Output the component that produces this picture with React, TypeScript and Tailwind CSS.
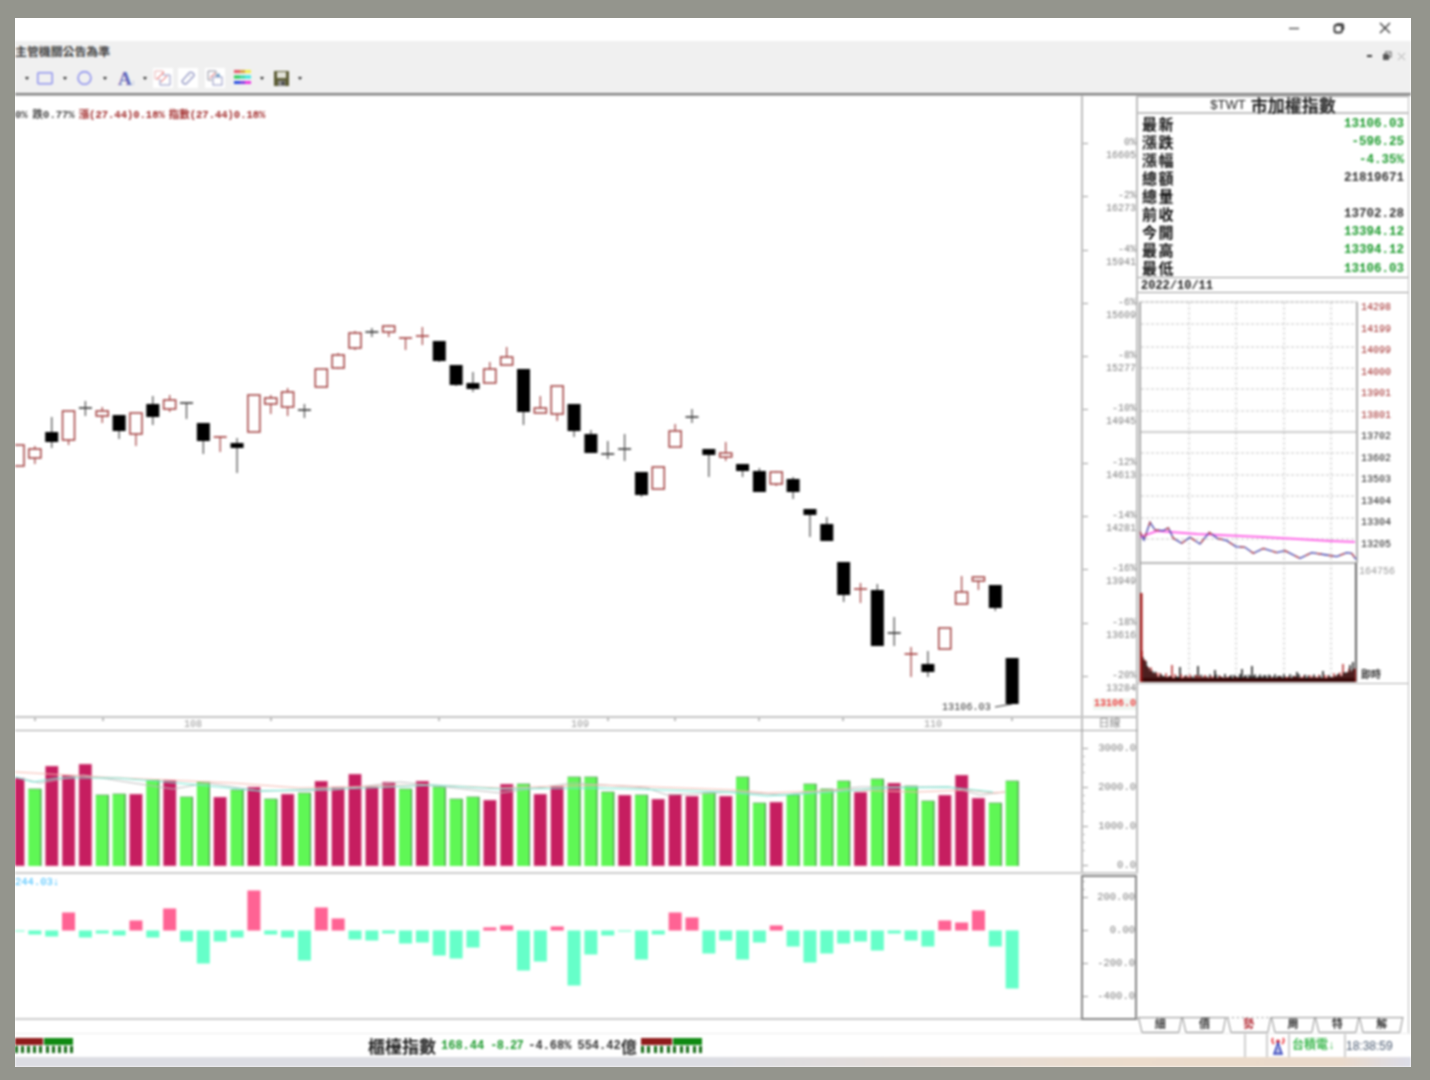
import React from "react";

type K = "r" | "b";
const candles: [number, number, number, number, K][] = [
  [445, 466, 445, 466, "r"], [446, 464, 449, 458, "r"], [417, 448, 432, 442, "b"], [411, 445, 411, 440, "r"],
  [401, 416, 408, 408, "b"], [407, 423, 411, 416, "r"], [415, 439, 415, 431, "b"], [413, 446, 413, 434, "r"],
  [396, 425, 404, 417, "b"], [395, 412, 400, 409, "r"], [403, 419, 403, 403, "b"], [423, 454, 423, 441, "b"],
  [437, 452, 437, 437, "r"], [438, 473, 443, 448, "b"], [395, 432, 395, 432, "r"], [395, 414, 398, 404, "r"],
  [388, 416, 392, 407, "r"], [404, 418, 410, 410, "b"], [369, 387, 369, 387, "r"], [353, 369, 355, 368, "r"],
  [331, 350, 333, 348, "r"], [328, 337, 332, 332, "b"], [325, 337, 326, 332, "r"], [338, 350, 338, 338, "r"],
  [327, 345, 336, 336, "r"], [341, 362, 341, 361, "b"], [365, 386, 365, 385, "b"], [372, 392, 383, 389, "b"],
  [362, 383, 369, 383, "r"], [347, 365, 357, 365, "r"], [369, 425, 369, 412, "b"], [396, 413, 408, 413, "r"],
  [386, 421, 386, 414, "r"], [404, 437, 404, 431, "b"], [430, 453, 434, 453, "b"], [441, 459, 454, 454, "b"],
  [434, 461, 449, 449, "b"], [472, 497, 472, 495, "b"], [467, 489, 467, 489, "r"], [424, 447, 431, 447, "r"],
  [409, 423, 417, 417, "b"], [449, 477, 449, 455, "b"], [442, 461, 453, 457, "r"], [464, 477, 464, 471, "b"],
  [468, 492, 471, 492, "b"], [471, 486, 472, 484, "r"], [477, 499, 479, 492, "b"], [509, 537, 509, 515, "b"],
  [517, 541, 524, 541, "b"], [562, 602, 562, 595, "b"], [583, 603, 589, 589, "r"], [584, 646, 590, 646, "b"],
  [617, 646, 633, 633, "b"], [647, 677, 654, 654, "r"], [651, 677, 664, 672, "b"], [628, 649, 628, 649, "r"],
  [576, 604, 592, 604, "r"], [577, 590, 577, 581, "r"], [585, 611, 585, 608, "b"], [658, 704, 658, 704, "b"],
];

const volume: [number, K][] = [
  [778, "r"], [789, "b"], [766, "r"], [775, "r"], [764, "r"], [795, "b"], [794, "b"], [794, "r"], [780, "b"], [780, "r"],
  [797, "b"], [782, "b"], [797, "r"], [790, "b"], [787, "r"], [799, "b"], [794, "r"], [793, "b"], [781, "r"], [787, "r"],
  [774, "r"], [786, "r"], [782, "r"], [789, "b"], [781, "r"], [787, "b"], [799, "b"], [797, "b"], [800, "r"], [784, "r"],
  [784, "b"], [794, "r"], [786, "r"], [777, "b"], [777, "b"], [792, "b"], [795, "r"], [795, "b"], [799, "r"], [794, "r"],
  [796, "r"], [793, "b"], [796, "r"], [777, "b"], [803, "b"], [802, "r"], [795, "b"], [784, "b"], [789, "b"], [781, "b"],
  [792, "r"], [779, "b"], [783, "r"], [786, "b"], [801, "b"], [795, "r"], [775, "r"], [798, "r"], [803, "b"], [781, "b"],
];

const macd = [
  -1, -4, -6, 18, -7, -3, -5, 10, -7, 22, -11, -33, -11, -7, 40, -4, -7, -30, 23, 12,
  -9, -10, -3, -13, -12, -25, -28, -17, 3, 5, -40, -31, 4, -55, -24, -5, -1, -29, -4, 18,
  13, -23, -10, -29, -12, 5, -16, -32, -23, -13, -11, -20, -3, -10, -16, 10, 8, 20, -16, -58,
];

const cx = (i: number) => 18 + 16.85 * i;

const quotes: [string, string, string][] = [
  ["最新", "13106.03", "text-[#1b9a2c]"],
  ["漲跌", "-596.25", "text-[#1b9a2c]"],
  ["漲幅", "-4.35%", "text-[#1b9a2c]"],
  ["總額", "21819671", "text-[#333333]"],
  ["總量", "", "text-[#333333]"],
  ["前收", "13702.28", "text-[#333333]"],
  ["今開", "13394.12", "text-[#1b9a2c]"],
  ["最高", "13394.12", "text-[#1b9a2c]"],
  ["最低", "13106.03", "text-[#1b9a2c]"],
];

const axisRows: [string, string][] = [
  ["0%", "16605"], ["-2%", "16273"], ["-4%", "15941"], ["-6%", "15609"], ["-8%", "15277"], ["-10%", "14945"],
  ["-12%", "14613"], ["-14%", "14281"], ["-16%", "13949"], ["-18%", "13616"],
];

const priceLabels: [string, string][] = [
  ["14298", "text-[#a02a2a]"], ["14199", "text-[#a02a2a]"], ["14099", "text-[#a02a2a]"], ["14000", "text-[#a02a2a]"],
  ["13901", "text-[#a02a2a]"], ["13801", "text-[#a02a2a]"], ["13702", "text-[#222222]"], ["13602", "text-[#222222]"],
  ["13503", "text-[#222222]"], ["13404", "text-[#222222]"], ["13304", "text-[#222222]"], ["13205", "text-[#222222]"],
];

const line: [number, number][] = [
  [30, 725], [42, 750], [60, 697], [75, 720], [100, 722], [115, 714], [130, 745], [155, 760], [180, 742], [210, 762],
  [238, 727], [262, 745], [290, 752], [318, 770], [345, 772], [370, 790], [400, 775], [440, 788], [465, 782], [510, 805],
  [545, 788], [590, 795], [620, 800], [650, 788], [665, 790], [678, 808],
];
const linePts = line.map(([x, y]) => `${1130 + x / 3},${290 + y / 3}`).join(" ");

const spikes: Record<number, number> = { 1172: 17, 1180: 15, 1198: 16, 1215: 12, 1242: 13, 1252: 16, 1297: 10, 1323: 11, 1343: 18, 1350: 17, 1353: 20 };
const tickVol = Array.from({ length: 215 }, (_, i) => {
  const x = 1141 + i;
  const noise = Math.abs(Math.sin(i * 1.7) * 3 + Math.sin(i * 0.43) * 2);
  const base = 3 + noise + 28 * Math.exp(-i / 7);
  const tail = i > 190 ? (i - 190) * 0.3 : 0;
  return { x, h: spikes[x] ?? base + tail };
});

function Arrow({ className }: { className: string }) {
  return <span className={`w-0 h-0 border-x-[2.5px] border-t-[3px] border-x-transparent border-t-[#222222] ${className}`} />;
}

function Tile({ className, children }: { className: string; children: React.ReactNode }) {
  return (
    <span className={`w-[20px] h-[20px] bg-white flex items-center justify-center ${className}`}>
      <svg width="18" height="18" viewBox="0 0 18 18" fill="none">{children}</svg>
    </span>
  );
}

function TickBars({ red, green }: { red: string; green: string }) {
  return (
    <div className="flex flex-col gap-[1px]">
      <div className="flex gap-[1px] h-[7px]">
        <div className={`bg-[#8f1a1a] ${red}`} />
        <div className={`bg-[#0f8a12] ${green}`} />
      </div>
      <div className="flex justify-between">
        {Array.from({ length: 10 }, (_, i) => (
          <span key={i} className="w-[3px] h-[7px] bg-[#146a14]" />
        ))}
      </div>
    </div>
  );
}

function Tab({ label, active }: { label: string; active?: boolean }) {
  return (
    <div className="relative w-[44.3px] h-[16px] flex items-center justify-center">
      <svg className="absolute inset-0" width="44.3" height="16" viewBox="0 0 45 16" fill="none">
        <path d="M0.5 0 L4 15.5 L41.5 15.5 L44.5 0" stroke="#8a8a8a" strokeWidth="1" />
        <path d="M0 0.5 H45" stroke="#8a8a8a" strokeWidth="1" strokeDasharray={active ? "2 3" : undefined} />
      </svg>
      <span className={`relative text-[11px] leading-none font-bold ${active ? "text-[#b5303a]" : "text-[#333333]"}`}>{label}</span>
    </div>
  );
}

export default function App() {
  return (
    <div className="w-[1430px] h-[1080px] bg-[#94958d] pt-[18px] pl-[15px] overflow-hidden [font-family:'Liberation_Mono','Noto_Sans_CJK_TC',monospace]">
      <div className="w-[1396px] h-[1049px] bg-white overflow-hidden">
      <div className="w-[1396px] h-[1049px] flex flex-col blur-[0.8px]">
        {/* title bar */}
        <div className="h-[23px] shrink-0 flex items-center bg-white pb-[3px]">
          <svg className="ml-[1273px]" width="12" height="12" viewBox="0 0 12 12"><path d="M1 6.5H11" stroke="#444" strokeWidth="1.3" /></svg>
          <svg className="ml-[33px]" width="12" height="12" viewBox="0 0 12 12" fill="none">
            <rect x="1.5" y="3" width="7.5" height="7.5" rx="1.5" stroke="#333" strokeWidth="1.8" />
            <path d="M3.5 2H9a1.5 1.5 0 0 1 1.5 1.5V8" stroke="#333" strokeWidth="1.3" />
          </svg>
          <svg className="ml-[34px]" width="12" height="12" viewBox="0 0 12 12"><path d="M1 1L11 11M11 1L1 11" stroke="#333" strokeWidth="1.3" /></svg>
        </div>

        {/* toolbar */}
        <div className="h-[52px] shrink-0 bg-[#f0f0f0] flex flex-col">
          <div className="h-[26px] flex items-center">
            <span className="text-[11.9px] leading-none text-[#444444] font-bold">主管機關公告為準</span>
            <div className="ml-auto flex items-center pr-[5px] mt-[4px]">
              <span className="w-[5px] h-[2px] bg-[#333333]" />
              <svg className="ml-[10px]" width="10" height="10" viewBox="0 0 10 10" fill="none">
                <rect x="1" y="3" width="6" height="6" fill="#555" />
                <rect x="3.5" y="1" width="5.5" height="5" stroke="#555" />
              </svg>
              <svg className="ml-[5px]" width="9" height="9" viewBox="0 0 9 9"><path d="M1 1L8 8M8 1L1 8" stroke="#a8a8a8" strokeWidth="1" /></svg>
            </div>
          </div>
          <div className="h-[22px] flex items-center">
            <Arrow className="ml-[9.5px]" />
            <svg className="ml-[8.5px]" width="16" height="13" viewBox="0 0 16 13" fill="none"><rect x="0.75" y="0.75" width="14.5" height="11" rx="1" stroke="#8e92ee" strokeWidth="1.5" /></svg>
            <Arrow className="ml-[9.5px]" />
            <svg className="ml-[10.5px]" width="15" height="14" viewBox="0 0 15 14" fill="none"><circle cx="7.5" cy="7" r="6.4" stroke="#8e92ee" strokeWidth="1.6" /></svg>
            <Arrow className="ml-[10.5px]" />
            <span className="ml-[11.5px] w-[18px] flex items-baseline text-[#6266bb] font-bold text-[19px] leading-none [font-family:'Liberation_Serif',serif]">
              A<span className="text-[9px] text-[#b5b8d8]">:</span>
            </span>
            <Arrow className="ml-[6.5px]" />
            <Tile className="ml-[6.5px]">
              <path d="M1 2H9V6M1 2V10H5" stroke="#e8b0b0" />
              <path d="M9 6H16V16H6V10" stroke="#8e92c0" />
              <path d="M3 10L10 3M7 13L13 7" stroke="#e85050" />
            </Tile>
            <Tile className="ml-[5px]">
              <path d="M3 12L10 4Q11.5 2.5 14 4Q16 6 14.5 7.5L7 15Q4 15.5 3 12Z" stroke="#9a9ec8" strokeWidth="1.4" />
              <path d="M9 5L13 9" stroke="#c0c2d8" />
            </Tile>
            <Tile className="ml-[7px]">
              <path d="M2 2H10V8M2 2V11H6" stroke="#8a8a9a" />
              <path d="M4 9L9 4" stroke="#e05050" />
              <rect x="7" y="8" width="9" height="8" stroke="#8e92c0" />
              <path d="M10 7L13 4L14 8Z" fill="#4f8cc0" />
            </Tile>
            <svg className="ml-[9px]" width="17" height="16" viewBox="0 0 17 16">
              <rect x="0" y="0" width="6" height="3" fill="#e35a6a" /><rect x="6" y="0" width="5" height="3" fill="#d8a040" /><rect x="11" y="0" width="6" height="3" fill="#f2ef4e" />
              <rect x="0" y="5.5" width="6" height="3" fill="#22cc55" /><rect x="6" y="5.5" width="5" height="3" fill="#30d8a0" /><rect x="11" y="5.5" width="6" height="3" fill="#34e8e0" />
              <rect x="0" y="11" width="6" height="3" fill="#2b50e0" /><rect x="6" y="11" width="5" height="3" fill="#8040e0" /><rect x="11" y="11" width="6" height="3" fill="#ee38e0" />
            </svg>
            <Arrow className="ml-[9px]" />
            <svg className="ml-[9.5px]" width="15" height="15" viewBox="0 0 15 15">
              <rect width="15" height="15" fill="#5c5c34" />
              <rect x="3" y="1" width="9" height="6" fill="#e2e2d8" />
              <rect x="4" y="9.5" width="7" height="5.5" fill="#8a8a8a" />
              <rect x="8" y="10.5" width="2" height="3.5" fill="#333" />
            </svg>
            <Arrow className="ml-[9.5px]" />
          </div>
          <div className="flex-1" />
        </div>
        <div className="h-[3px] shrink-0 bg-[#808080] border-b border-[#c4c4c4]" />

        {/* main */}
        <div className="h-[937px] shrink-0 flex">
          {/* left charts */}
          <div className="w-[1123px] shrink-0 flex flex-col">
            <div className="h-[620px] shrink-0 flex">
              <div className="relative w-[1066px] shrink-0">
                <div className="absolute left-0 top-[13px] text-[10.5px] leading-[13px] whitespace-pre text-[#444444] font-bold">
                  0%<span className="ml-[5px]">跌0.77%</span>
                  <span className="ml-[4px] text-[#a02a2a]">漲(27.44)0.18%</span>
                  <span className="ml-[4px] text-[#a02a2a]">指數(27.44)0.18%</span>
                </div>
                <svg width="1066" height="620" viewBox="15 96 1066 620">
                  {candles.map(([wt, wb, bt, bb, k], i) => {
                    const x = cx(i);
                    const col = k === "r" ? "#a03c3c" : "#000000";
                    const wickCol = k === "r" ? "#a54848" : "#555555";
                    const flat = bb - bt < 1;
                    return (
                      <g key={i}>
                        <line x1={x} x2={x} y1={wt} y2={wb} stroke={wickCol} strokeWidth="1.3" />
                        {flat ? (
                          <line x1={x - 6.5} x2={x + 6.5} y1={bt} y2={bt} stroke={k === "r" ? "#a33c3c" : "#333333"} strokeWidth="1.6" />
                        ) : k === "r" ? (
                          <rect x={x - 6} y={bt} width="12" height={bb - bt} fill="#fff" stroke={col} strokeWidth="1.5" />
                        ) : (
                          <rect x={x - 6.5} y={bt} width="13" height={bb - bt} fill={col} />
                        )}
                      </g>
                    );
                  })}
                  <text x="942" y="710" fontSize="10" fill="#333" letterSpacing="0.1">13106.03</text>
                  <path d="M995 707L1012 704" stroke="#333" strokeWidth="1" />
                </svg>
              </div>
              <div className="w-[57px] shrink-0 border-x-2 border-[#bcbcbc] pt-[40px] text-[10px] leading-[13px] text-[#808080] text-right flex flex-col">
                {axisRows.map(([p, v]) => (
                  <div key={v} className="h-[53.3px] shrink-0 flex justify-between">
                    <span className="w-[5px] h-[1px] mt-[7px] bg-[#999999]" />
                    <div>
                      <div>{p}</div>
                      <div>{v}</div>
                    </div>
                  </div>
                ))}
                <div className="h-[29px] shrink-0 flex justify-between">
                  <span className="w-[5px] h-[1px] mt-[7px] bg-[#999999]" />
                  <div>
                    <div>-20%</div>
                    <div>13284</div>
                  </div>
                </div>
                <div className="h-[12px] leading-[12px] ml-[10px] bg-[#f0f6f0] text-[#ee4444] font-bold">13106.0</div>
              </div>
            </div>

            {/* date strip */}
            <div className="h-[15px] shrink-0 flex border-y-2 border-b-[1px] border-t-[#c4c4c4] border-b-[#a0a0a0]">
              <div className="w-[1066px] shrink-0 relative text-[10px] leading-[13px] text-[#999999]">
                <svg className="absolute inset-0" width="1066" height="4" viewBox="15 0 1066 4">
                  {[35, 103, 271, 439, 608, 675, 759, 843, 1012].map((x) => (
                    <line key={x} x1={x} x2={x} y1="0" y2="3" stroke="#777" />
                  ))}
                </svg>
                <span className="absolute left-[169px] top-0">108</span>
                <span className="absolute left-[556px] top-0">109</span>
                <span className="absolute left-[909px] top-0">110</span>
              </div>
              <div className="w-[57px] shrink-0 border-x-2 border-[#bcbcbc] text-[11px] leading-[13px] text-[#888888] text-center">日線</div>
            </div>

            {/* volume */}
            <div className="h-[143px] shrink-0 flex border-b-2 border-[#cccccc]">
              <svg width="1066" height="141" viewBox="15 731 1066 141" className="shrink-0">
                {volume.map(([t, k], i) => {
                  const x = cx(i);
                  return k === "r" ? (
                    <rect key={i} x={x - 6.5} y={t} width="13" height={866 - t} fill="#c61e60" stroke="#f0c0d0" strokeWidth="0.6" />
                  ) : (
                    <g key={i}>
                      <rect x={x - 6.5} y={t} width="13" height={866 - t} fill="#5ff755" />
                      <line x1={x + 6} x2={x + 6} y1={t} y2="866" stroke="#45824a" strokeWidth="1" />
                      <line x1={x - 6.5} x2={x + 6.5} y1={t} y2={t} stroke="#5f9a5f" strokeWidth="0.7" />
                    </g>
                  );
                })}
                <polyline fill="none" stroke="#bdbdbd" strokeWidth="1" points="15,777 40,783 83,775 133,783 173,789 207,783 260,791 333,790 400,782 500,793 573,783 647,788 667,795 733,792 783,795 860,787 950,787 980,795 1005,792" />
                <polyline fill="none" stroke="#f6b8ae" strokeWidth="1" points="15,772 100,777 233,783 300,788 433,785 500,788 600,785 733,790 767,793 850,790 917,792 967,790 993,793 1005,792" />
                <polyline fill="none" stroke="#70ead4" strokeWidth="1.2" points="15,777 33,782 57,778 117,778 167,782 260,791 367,788 433,785 500,789 600,788 727,792 767,796 833,792 883,788 947,787 993,792" />
              </svg>
              <div className="w-[57px] shrink-0 border-x-2 border-[#bcbcbc] relative text-[10.5px] text-[#808080] text-right flex flex-col pt-[11px]">
                {["3000.0", "2000.0", "1000.0", "0.0"].map((v) => (
                  <div key={v} className="h-[39px] shrink-0 leading-[13px] flex justify-between">
                    <span className="flex flex-col gap-[7px] pt-[6px]">
                      <span className="w-[5px] h-[1px] bg-[#999999]" />
                      <span className="w-[2px] h-[1px] bg-[#bbbbbb]" />
                      <span className="w-[2px] h-[1px] bg-[#bbbbbb]" />
                      <span className="w-[2px] h-[1px] bg-[#bbbbbb]" />
                    </span>
                    <span>{v}</span>
                  </div>
                ))}
              </div>
            </div>

            {/* macd */}
            <div className="h-[146px] shrink-0 flex border-b-2 border-[#cccccc]">
              <div className="relative w-[1066px] shrink-0">
                <span className="absolute left-0 top-[2px] text-[10.5px] leading-[12px] text-[#38bcff]">244.03↓</span>
                <svg width="1066" height="144" viewBox="15 874 1066 144">
                  {macd.map((v, i) => (
                    <rect key={i} x={cx(i) - 6.5} y={v > 0 ? 930.5 - v : 930.5} width="13" height={Math.abs(v)} fill={v > 0 ? "#ff6394" : "#66ffc9"} />
                  ))}
                </svg>
              </div>
              <div className="w-[56px] shrink-0 h-[145px] mt-[1px] border-2 border-[#858585] text-[10.5px] leading-[12px] text-[#808080] text-right flex flex-col pt-[14px]">
                {["200.00", "0.00", "-200.0", "-400.0"].map((v) => (
                  <div key={v} className="h-[33px] shrink-0 flex justify-between">
                    <span className="w-[5px] h-[1px] mt-[6px] bg-[#999999]" />
                    <span>{v}</span>
                  </div>
                ))}
              </div>
            </div>
            <div className="flex-1" />
          </div>

          {/* right panel */}
          <div className="w-[271px] shrink-0 flex flex-col border-r border-[#bcbcbc]">
            <div className="h-[18px] shrink-0 flex items-center justify-center gap-[5px] pb-[1px] border-b-2 border-[#c0c0c0] border-t border-t-[#a0a0a0] text-[#222222]">
              <span className="text-[13px] leading-none [font-family:'Liberation_Sans',sans-serif]">$TWT</span>
              <span className="text-[17px] leading-none font-bold [font-family:'Noto_Sans_CJK_TC',sans-serif]">市加權指數</span>
            </div>
            <div className="h-[163px] shrink-0 flex flex-col pl-[4px] pr-[4px]">
              {quotes.map(([l, v, c]) => (
                <div key={l} className="h-[18.1px] shrink-0 flex items-center justify-between">
                  <span className="text-[15px] leading-none font-bold tracking-[1.5px] text-[#111111] [font-family:'Noto_Sans_CJK_TC',sans-serif]">{l}</span>
                  <span className={`text-[12.5px] mt-[2px] leading-none font-bold ${c}`}>{v}</span>
                </div>
              ))}
            </div>
            <div className="h-[16px] shrink-0 border-y border-[#999999] pl-[3px] text-[12px] leading-[16px] font-bold text-[#222222]">2022/10/11</div>
            <div className="h-[390px] shrink-0 flex">
              <svg width="221" height="390" viewBox="1138 293 221 390" className="shrink-0">
                <g stroke="#c8c8c8" strokeWidth="1" strokeDasharray="3 2">
                  {[324, 347, 368, 389, 411, 453, 475, 496, 518, 539].map((y) => (
                    <line key={y} x1="1141" x2="1356" y1={y} y2={y} />
                  ))}
                  {[1189, 1236, 1284, 1331].map((x) => (
                    <line key={x} x1={x} x2={x} y1="302" y2="682" />
                  ))}
                </g>
                <line x1="1140" x2="1357" y1="302" y2="302" stroke="#a8a8a8" strokeDasharray="4 1" />
                <line x1="1140" x2="1357" y1="432" y2="432" stroke="#9a9a9a" />
                <line x1="1140" x2="1357" y1="563" y2="563" stroke="#b8b8b8" strokeWidth="2" />
                <line x1="1140" x2="1140" y1="302" y2="682" stroke="#a8a8a8" strokeWidth="2" />
                <line x1="1357" x2="1357" y1="302" y2="563" stroke="#b0b0b0" strokeWidth="2" />
                <line x1="1356" x2="1356" y1="563" y2="682" stroke="#666" strokeWidth="2" />
                <polyline fill="none" stroke="#ff66e8" strokeWidth="2" points="1140,537 1157,531 1197,534 1263,537 1330,541 1355,542" />
                <polyline fill="none" stroke="#3a3aa8" strokeWidth="1.3" points={linePts} />
                <polyline fill="none" stroke="#c24a4a" strokeWidth="1.3" strokeDasharray="5 7" points={linePts} />
                <rect x="1141" y="678" width="214" height="4" fill="#220808" />
                {tickVol.map(({ x, h }, i) => (
                  <line key={x} x1={x} x2={x} y1={682 - h} y2="682" stroke={i % 3 === 1 ? "#b01a1a" : "#000000"} strokeWidth="1.4" />
                ))}
                <rect x="1140" y="593" width="2.5" height="89" fill="#a81c1c" />
              </svg>
              <div className="flex-1 flex flex-col pt-[4px] pl-[2px] text-[10px] leading-[21.5px]">
                {priceLabels.map(([v, c]) => (
                  <div key={v} className={`h-[21.5px] shrink-0 ${c}`}>{v}</div>
                ))}
                <div className="mt-[10px] -ml-[2px] leading-[14px] text-[#999999]">164756</div>
                <div className="mt-auto leading-[14px] font-bold text-[#333333]">即時</div>
              </div>
            </div>
            <div className="h-px shrink-0 bg-[#b0b0b0]" />
            <div className="flex-1" />
            <div className="h-[16px] shrink-0 flex">
              <Tab label="細" />
              <Tab label="價" />
              <Tab label="勢" active />
              <Tab label="周" />
              <Tab label="特" />
              <Tab label="解" />
            </div>
          </div>
        </div>

        {/* status bar */}
        <div className="h-[24px] shrink-0 flex items-center border-t border-[#eeeeee]">
          <div className="w-[58px] shrink-0">
            <TickBars red="w-[28px]" green="w-[29px]" />
          </div>
          <div className="ml-[295px] w-[273px] shrink-0 flex items-center whitespace-nowrap">
            <span className="text-[17px] leading-none font-bold text-[#222222] [font-family:'Noto_Sans_CJK_TC',sans-serif] w-[73px]">櫃檯指數</span>
            <span className="text-[12px] leading-none font-bold text-[#1b9a2c]">168.44</span>
            <span className="ml-[6px] text-[12px] leading-none font-bold text-[#1b9a2c] tracking-[-0.6px]">-8.27</span>
            <span className="ml-[5px] text-[12px] leading-none font-bold text-[#333333]">-4.68%</span>
            <span className="ml-[6px] text-[12px] leading-none font-bold text-[#333333]">554.42</span>
            <span className="text-[16px] leading-none font-bold text-[#333333] [font-family:'Noto_Sans_CJK_TC',sans-serif]">億</span>
          </div>
          <div className="w-[61px] shrink-0">
            <TickBars red="w-[31px]" green="w-[29px]" />
          </div>
          <div className="ml-[542px] w-[22px] self-stretch border-l-2 border-[#cfcfcf]" />
          <div className="w-[22px] self-stretch border-l-2 border-[#cfcfcf] flex items-center justify-center">
            <svg width="14" height="18" viewBox="0 0 14 18" fill="none">
              <path d="M2 1Q0 4 3 7M12 1Q14 4 11 7" stroke="#e8323a" strokeWidth="1.6" />
              <circle cx="7" cy="4.5" r="2" fill="#e8323a" />
              <path d="M7 6L3 17H11Z" stroke="#2a3ab8" strokeWidth="1.5" />
              <path d="M5 12H9M4 15H10" stroke="#2a3ab8" />
            </svg>
          </div>
          <div className="w-[56px] self-stretch border-l-2 border-[#cfcfcf] pl-[2px] flex items-center text-[12px] leading-none font-bold text-[#3cb84e] whitespace-nowrap">台積電↓</div>
          <div className="self-stretch border-l-2 border-[#cfcfcf] flex items-center text-[12px] leading-none text-[#4a5a70] [font-family:'Liberation_Sans',sans-serif]">18:38:59</div>
        </div>

        {/* task strip */}
        <div className="h-[10px] shrink-0 bg-[linear-gradient(90deg,#dcdde3_0%,#dcdde3_50%,#ecdccc_80%,#eadacb_95%,#dcdde8_100%)]" />
      </div>
      </div>
    </div>
  );
}
